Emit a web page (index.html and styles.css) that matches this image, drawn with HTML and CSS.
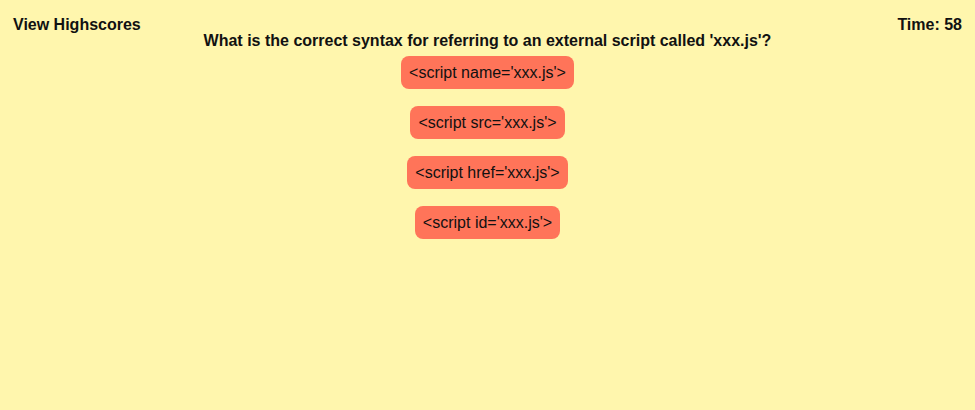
FILE: index.html
```html
<!DOCTYPE html>
<html>
<head>
<meta charset="utf-8">
<link rel="stylesheet" href="styles.css">
</head>
<body>
<header class="topbar">
  <span class="link">View Highscores</span>
  <span class="timer">Time: 58</span>
</header>
<main class="quiz">
  <h1 class="question">What is the correct syntax for referring to an external script called 'xxx.js'?</h1>
  <div class="choices">
    <button class="choice">&lt;script name='xxx.js'&gt;</button>
    <button class="choice">&lt;script src='xxx.js'&gt;</button>
    <button class="choice">&lt;script href='xxx.js'&gt;</button>
    <button class="choice">&lt;script id='xxx.js'&gt;</button>
  </div>
</main>
</body>
</html>
```
FILE: styles.css
```css
html, body {
  margin: 0;
  padding: 0;
  background: #fff6ad;
  height: 100%;
}
body {
  font-family: "Liberation Sans", Arial, sans-serif;
  color: #111;
}
.topbar {
  display: flex;
  justify-content: space-between;
  padding: 16px 13px 0;
  font-weight: bold;
  font-size: 16px;
  line-height: 18px;
}
.question {
  margin: -2px 0 0;
  font-size: 16px;
  line-height: 18px;
  text-align: center;
  font-weight: bold;
}
.choices {
  display: flex;
  flex-direction: column;
  align-items: center;
  gap: 17px;
  margin-top: 6px;
}
.choice {
  font-family: "Liberation Sans", Arial, sans-serif;
  font-size: 16px;
  line-height: 19px;
  padding: 7px 8px;
  border: none;
  border-radius: 8px;
  background: #ff7459;
  color: #111;
}
```
